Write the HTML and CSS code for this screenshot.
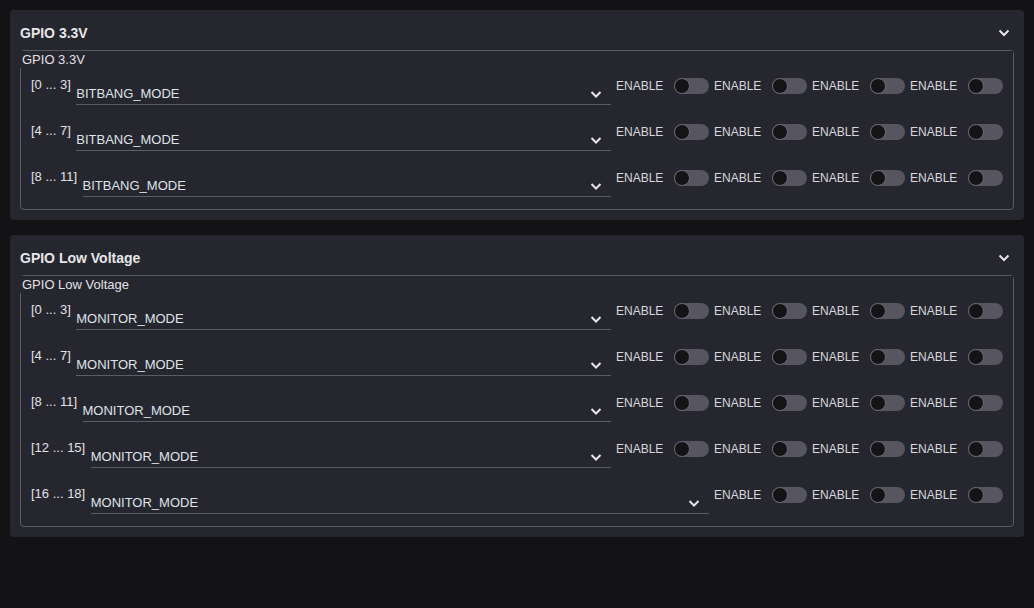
FILE: index.html
```html
<!DOCTYPE html>
<html>
<head>
<meta charset="utf-8">
<link rel="stylesheet" href="styles.css">
</head>
<body>
<section class="card">
  <div class="card-header">
    <span class="card-title">GPIO 3.3V</span>
    <svg class="chev-lg" width="12" height="8" viewBox="0 0 12 8"><path d="M1.5 1.5 L6 6 L10.5 1.5" fill="none" stroke="#e6e6ea" stroke-width="2"/></svg>
  </div>
  <div class="group">
    <div class="legend">GPIO 3.3V</div>
    <div class="rows">
      <div class="row">
        <span class="label">[0 ... 3]</span>
        <div class="select"><span>BITBANG_MODE</span><svg class="chev" width="12" height="7" viewBox="0 0 12 7"><path d="M1.5 1 L6 5.5 L10.5 1" fill="none" stroke="#e6e6ea" stroke-width="2"/></svg></div>
        <div class="tg"><span>ENABLE</span><i class="sw"></i></div>
        <div class="tg"><span>ENABLE</span><i class="sw"></i></div>
        <div class="tg"><span>ENABLE</span><i class="sw"></i></div>
        <div class="tg"><span>ENABLE</span><i class="sw"></i></div>
      </div>
      <div class="row">
        <span class="label">[4 ... 7]</span>
        <div class="select"><span>BITBANG_MODE</span><svg class="chev" width="12" height="7" viewBox="0 0 12 7"><path d="M1.5 1 L6 5.5 L10.5 1" fill="none" stroke="#e6e6ea" stroke-width="2"/></svg></div>
        <div class="tg"><span>ENABLE</span><i class="sw"></i></div>
        <div class="tg"><span>ENABLE</span><i class="sw"></i></div>
        <div class="tg"><span>ENABLE</span><i class="sw"></i></div>
        <div class="tg"><span>ENABLE</span><i class="sw"></i></div>
      </div>
      <div class="row">
        <span class="label">[8 ... 11]</span>
        <div class="select"><span>BITBANG_MODE</span><svg class="chev" width="12" height="7" viewBox="0 0 12 7"><path d="M1.5 1 L6 5.5 L10.5 1" fill="none" stroke="#e6e6ea" stroke-width="2"/></svg></div>
        <div class="tg"><span>ENABLE</span><i class="sw"></i></div>
        <div class="tg"><span>ENABLE</span><i class="sw"></i></div>
        <div class="tg"><span>ENABLE</span><i class="sw"></i></div>
        <div class="tg"><span>ENABLE</span><i class="sw"></i></div>
      </div>
    </div>
  </div>
</section>

<section class="card">
  <div class="card-header">
    <span class="card-title">GPIO Low Voltage</span>
    <svg class="chev-lg" width="12" height="8" viewBox="0 0 12 8"><path d="M1.5 1.5 L6 6 L10.5 1.5" fill="none" stroke="#e6e6ea" stroke-width="2"/></svg>
  </div>
  <div class="group">
    <div class="legend">GPIO Low Voltage</div>
    <div class="rows">
      <div class="row">
        <span class="label">[0 ... 3]</span>
        <div class="select"><span>MONITOR_MODE</span><svg class="chev" width="12" height="7" viewBox="0 0 12 7"><path d="M1.5 1 L6 5.5 L10.5 1" fill="none" stroke="#e6e6ea" stroke-width="2"/></svg></div>
        <div class="tg"><span>ENABLE</span><i class="sw"></i></div>
        <div class="tg"><span>ENABLE</span><i class="sw"></i></div>
        <div class="tg"><span>ENABLE</span><i class="sw"></i></div>
        <div class="tg"><span>ENABLE</span><i class="sw"></i></div>
      </div>
      <div class="row">
        <span class="label">[4 ... 7]</span>
        <div class="select"><span>MONITOR_MODE</span><svg class="chev" width="12" height="7" viewBox="0 0 12 7"><path d="M1.5 1 L6 5.5 L10.5 1" fill="none" stroke="#e6e6ea" stroke-width="2"/></svg></div>
        <div class="tg"><span>ENABLE</span><i class="sw"></i></div>
        <div class="tg"><span>ENABLE</span><i class="sw"></i></div>
        <div class="tg"><span>ENABLE</span><i class="sw"></i></div>
        <div class="tg"><span>ENABLE</span><i class="sw"></i></div>
      </div>
      <div class="row">
        <span class="label">[8 ... 11]</span>
        <div class="select"><span>MONITOR_MODE</span><svg class="chev" width="12" height="7" viewBox="0 0 12 7"><path d="M1.5 1 L6 5.5 L10.5 1" fill="none" stroke="#e6e6ea" stroke-width="2"/></svg></div>
        <div class="tg"><span>ENABLE</span><i class="sw"></i></div>
        <div class="tg"><span>ENABLE</span><i class="sw"></i></div>
        <div class="tg"><span>ENABLE</span><i class="sw"></i></div>
        <div class="tg"><span>ENABLE</span><i class="sw"></i></div>
      </div>
      <div class="row">
        <span class="label">[12 ... 15]</span>
        <div class="select"><span>MONITOR_MODE</span><svg class="chev" width="12" height="7" viewBox="0 0 12 7"><path d="M1.5 1 L6 5.5 L10.5 1" fill="none" stroke="#e6e6ea" stroke-width="2"/></svg></div>
        <div class="tg"><span>ENABLE</span><i class="sw"></i></div>
        <div class="tg"><span>ENABLE</span><i class="sw"></i></div>
        <div class="tg"><span>ENABLE</span><i class="sw"></i></div>
        <div class="tg"><span>ENABLE</span><i class="sw"></i></div>
      </div>
      <div class="row">
        <span class="label">[16 ... 18]</span>
        <div class="select"><span>MONITOR_MODE</span><svg class="chev" width="12" height="7" viewBox="0 0 12 7"><path d="M1.5 1 L6 5.5 L10.5 1" fill="none" stroke="#e6e6ea" stroke-width="2"/></svg></div>
        <div class="tg"><span>ENABLE</span><i class="sw"></i></div>
        <div class="tg"><span>ENABLE</span><i class="sw"></i></div>
        <div class="tg"><span>ENABLE</span><i class="sw"></i></div>
      </div>
    </div>
  </div>
</section>
</body>
</html>
```
FILE: styles.css
```css
html, body {
  margin: 0;
  padding: 0;
}
body {
  background: #131315;
  padding: 10px;
  font-family: "Liberation Sans", Arial, sans-serif;
  color: #e2e2e6;
}
.card {
  background: #26262e;
  border-radius: 4px;
  padding: 0 10px 10px 10px;
  margin-bottom: 15px;
}
.card-header {
  display: flex;
  align-items: center;
  justify-content: space-between;
  padding-top: 15px;
  height: 16px;
  margin-bottom: 9px;
}
.card-title {
  font-size: 14px;
  font-weight: bold;
  line-height: 16px;
  color: #e6e6ea;
}
.chev-lg {
  display: block;
  margin-right: 4px;
}
.group {
  border: 1px solid #5c5c66;
  border-radius: 4px;
  padding-bottom: 3px;
}
.legend {
  font-size: 13px;
  line-height: 17px;
  height: 17px;
  padding-left: 2px;
  margin-left: -1px;
  background: #26262e;
  position: relative;
  color: #e2e2e6;
}
.row {
  display: flex;
  align-items: flex-start;
  height: 46px;
  padding: 10px 10px 0 10px;
  box-sizing: border-box;
}
.label {
  font-size: 13px;
  line-height: 16px;
  white-space: nowrap;
  margin-right: 5.5px;
  margin-top: -1px;
}
.select {
  flex: 1;
  display: flex;
  align-items: center;
  justify-content: space-between;
  margin-top: 4px;
  padding: 3px 0 1px 0;
  line-height: 18px;
  font-size: 13px;
  border-bottom: 1px solid #5c5c66;
  color: #dfe3ea;
}
.chev {
  display: block;
  margin-right: 9px;
  margin-top: 0;
}
.tg {
  display: flex;
  align-items: center;
  margin-left: 5px;
  height: 16px;
}
.tg span {
  font-size: 12px;
  line-height: 16px;
  color: #d6d8de;
  width: 48px;
  margin-right: 10px;
  white-space: nowrap;
}
.sw {
  display: block;
  width: 35px;
  height: 16px;
  border-radius: 8px;
  background: #57555f;
  position: relative;
}
.sw::before {
  content: "";
  position: absolute;
  left: 0;
  top: 0;
  width: 14px;
  height: 14px;
  border-radius: 50%;
  background: #141417;
  border: 1px solid #6a6872;
}
```
